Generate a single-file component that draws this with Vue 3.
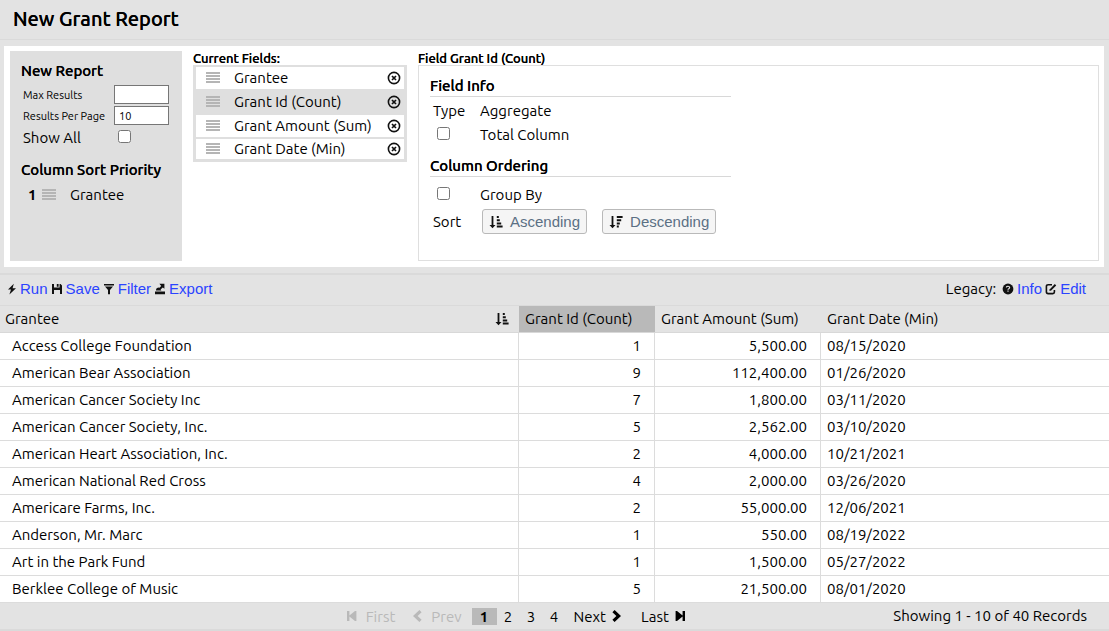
<script setup>
import { ref } from 'vue'

const maxResults = ref('')
const perPage = ref('10')
const selected = ref(1)
const fields = ['Grantee', 'Grant Id (Count)', 'Grant Amount (Sum)', 'Grant Date (Min)']
const rows = [
  ['Access College Foundation', '1', '5,500.00', '08/15/2020'],
  ['American Bear Association', '9', '112,400.00', '01/26/2020'],
  ['American Cancer Society Inc', '7', '1,800.00', '03/11/2020'],
  ['American Cancer Society, Inc.', '5', '2,562.00', '03/10/2020'],
  ['American Heart Association, Inc.', '2', '4,000.00', '10/21/2021'],
  ['American National Red Cross', '4', '2,000.00', '03/26/2020'],
  ['Americare Farms, Inc.', '2', '55,000.00', '12/06/2021'],
  ['Anderson, Mr. Marc', '1', '550.00', '08/19/2022'],
  ['Art in the Park Fund', '1', '1,500.00', '05/27/2022'],
  ['Berklee College of Music', '5', '21,500.00', '08/01/2020']
]
</script>

<template>
  <div class="page">
    <header class="title-bar"><h1>New Grant Report</h1></header>

    <main>
      <section class="builder">
        <aside class="settings">
          <h2>New Report</h2>
          <div class="setting">
            <label for="max">Max Results</label>
            <input id="max" v-model="maxResults" type="text" />
          </div>
          <div class="setting">
            <label for="per">Results Per Page</label>
            <input id="per" v-model="perPage" type="text" />
          </div>
          <div class="setting show-all">
            <label for="all">Show All</label>
            <input id="all" type="checkbox" />
          </div>
          <h2 class="priority-title">Column Sort Priority</h2>
          <div class="priority">
            <b>1</b>
            <span class="grip"></span>
            <span class="priority-name">Grantee</span>
          </div>
        </aside>

        <section class="current">
          <h3>Current Fields:</h3>
          <ul>
            <li v-for="(f, i) in fields" :key="f" :class="{ selected: i === selected }" @click="selected = i">
              <span class="grip"></span>
              <span class="field-name">{{ f }}</span>
              <button type="button" class="remove" :aria-label="'Remove ' + f">
                <svg width="14" height="14" viewBox="0 0 14 14">
                  <circle cx="7" cy="7" r="5.6" fill="none" stroke="#111" stroke-width="1.6" />
                  <path d="M5 5 9 9M9 5 5 9" stroke="#111" stroke-width="1.7" />
                </svg>
              </button>
            </li>
          </ul>
        </section>

        <section class="details">
          <h3>Field Grant Id (Count)</h3>
          <div class="details-box">
            <h2>Field Info</h2>
            <div class="info-row type-row"><span>Type</span><span>Aggregate</span></div>
            <div class="info-row">
              <input id="total" type="checkbox" />
              <label for="total">Total Column</label>
            </div>
            <h2 class="ordering">Column Ordering</h2>
            <div class="info-row group-row">
              <input id="group" type="checkbox" />
              <label for="group">Group By</label>
            </div>
            <div class="info-row sort-row">
              <span>Sort</span>
              <div class="sorts">
                <button type="button" class="sort">
                  <svg width="14" height="14" viewBox="0 0 14 14">
                    <path d="M2.6 1h1.8v9H6.5L3.5 13.2.5 10h2.1zM7.8 1h2v2h-2zM7.8 4.2h3v2h-3zM7.8 7.4h4.4v2H7.8zM7.8 10.6h5.8v2H7.8z" fill="#111" />
                  </svg>
                  Ascending
                </button>
                <button type="button" class="sort">
                  <svg width="14" height="14" viewBox="0 0 14 14">
                    <path d="M2.6 1h1.8v9H6.5L3.5 13.2.5 10h2.1zM7.8 1h5.8v2H7.8zM7.8 4.2h4.4v2H7.8zM7.8 7.4h3v2h-3zM7.8 10.6h2v2h-2z" fill="#111" />
                  </svg>
                  Descending
                </button>
              </div>
            </div>
          </div>
        </section>
      </section>

      <nav class="toolbar">
        <div class="actions">
          <a href="#run">
            <svg width="10" height="12" viewBox="0 0 10 12"><path d="M6.8.8 1 6.6h3L2.4 11.4 9 5.2H5.6z" fill="#111" /></svg>Run</a>
          <a href="#save">
            <svg width="12" height="12" viewBox="0 0 12 12"><path d="M1 1h2v3.6h5.6V1h1L11 2.4V11H9V7H3v4H1zM5.8 1h1.8v2.8H5.8z" fill="#111" /></svg>Save</a>
          <a href="#filter">
            <svg width="12" height="12" viewBox="0 0 12 12"><path d="M1 1h10v1.4H1zM2 3.4h8L7 7v4.2H5V7z" fill="#111" /></svg>Filter</a>
          <a href="#export">
            <svg width="12" height="12" viewBox="0 0 12 12"><path d="M1 8.6h10v2.6H1zM5.4.8h5v5L8.8 4.4 6.6 6.4 5.2 5l2-2zM2 7.6C2 5.4 3 4.6 5 4.6L7.4 7.6z" fill="#111" /></svg>Export</a>
        </div>
        <div class="legacy">
          <span class="legacy-label">Legacy:</span>
          <a href="#info">
            <svg width="12" height="12" viewBox="0 0 12 12"><circle cx="6" cy="6" r="5.4" fill="#111" /><path d="M4.4 4.6C4.4 2.8 7.8 2.8 7.6 4.7 7.5 5.8 6 5.7 6 6.8M6 7.6v1.2" fill="none" stroke="#e3e3e3" stroke-width="1.2" /></svg>Info</a>
          <a href="#edit">
            <svg width="12" height="12" viewBox="0 0 12 12"><path d="M7 1.8H3.2Q1.4 1.8 1.4 3.4V9q0 1.6 1.8 1.6h4.6Q9.4 10.6 9.4 9V7" fill="none" stroke="#111" stroke-width="1.6" /><path d="M4.4 8 4.8 6.2 9.8 1l1.4 1.4-5 5.2z" fill="#111" /></svg>Edit</a>
        </div>
      </nav>

      <table>
        <colgroup><col class="c1" /><col class="c2" /><col class="c3" /><col /></colgroup>
        <thead>
          <tr>
            <th>
              <div class="sorted">
                Grantee
                <svg width="14" height="14" viewBox="0 0 14 14">
                  <path d="M2.6 1h1.8v9H6.5L3.5 13.2.5 10h2.1zM7.8 1h2v2h-2zM7.8 4.2h3v2h-3zM7.8 7.4h4.4v2H7.8zM7.8 10.6h5.8v2H7.8z" fill="#111" />
                </svg>
              </div>
            </th>
            <th class="active">Grant Id (Count)</th>
            <th>Grant Amount (Sum)</th>
            <th>Grant Date (Min)</th>
          </tr>
        </thead>
        <tbody>
          <tr v-for="r in rows" :key="r[0]">
            <td>{{ r[0] }}</td>
            <td class="num">{{ r[1] }}</td>
            <td class="num">{{ r[2] }}</td>
            <td class="date">{{ r[3] }}</td>
          </tr>
        </tbody>
      </table>
    </main>

    <footer>
      <nav class="pager">
        <button type="button" class="first" disabled>
          <svg width="12" height="14" viewBox="0 0 12 14"><path d="M1 2h2.4v4.4L9 2h1.4v10H9L3.4 7.6V12H1z" fill="currentColor" /></svg>First
        </button>
        <button type="button" class="prev" disabled>
          <svg width="12" height="14" viewBox="0 0 12 14"><path d="M8.4 1 10.6 3.2 6.6 7l4 3.8L8.4 13 2 7z" fill="currentColor" /></svg>Prev
        </button>
        <button type="button" class="num-btn current-page">1</button>
        <button type="button" class="num-btn">2</button>
        <button type="button" class="num-btn">3</button>
        <button type="button" class="num-btn">4</button>
        <button type="button" class="next">
          Next<svg width="12" height="14" viewBox="0 0 12 14"><path d="M3.6 1 1.4 3.2l4 3.8-4 3.8L3.6 13 10 7z" fill="currentColor" /></svg>
        </button>
        <button type="button" class="last">
          Last<svg width="12" height="14" viewBox="0 0 12 14"><path d="M11 2H8.6v4.4L3 2H1.6v10H3l5.6-4.4V12H11z" fill="currentColor" /></svg>
        </button>
      </nav>
      <span class="count">Showing 1 - 10 of 40 Records</span>
    </footer>
  </div>
</template>

<style>
body { background: #e3e3e3; }
</style>

<style scoped>
* { box-sizing: border-box; }
.page {
  font-family: Ubuntu, "Noto Sans", sans-serif;
  font-size: 15px;
  line-height: 20px;
  color: #000;
  background: #e3e3e3;
}
h1, h2, h3, ul { margin: 0; padding: 0; }
h1 { font-size: 20px; line-height: 24px; font-weight: 500; text-shadow: 0 0 0 #000; }
h2 { font-size: 15px; line-height: 20px; font-weight: 500; text-shadow: 0 0 0 #000; }
h3 { font-size: 13px; line-height: 14px; font-weight: 500; text-shadow: 0 0 0 #000; }
svg { display: block; flex: none; }
button { font: inherit; color: inherit; cursor: pointer; }
input[type="checkbox"] { margin: 0; width: 13px; height: 13px; }

.title-bar { padding: 7px 13px 8px; border-bottom: 1px solid #dadada; }
.builder {
  display: flex;
  margin: 6px 5px 6px 4px;
  padding: 5px 5px 6px 6px;
  background: #fff;
}
.settings { width: 172px; background: #dfdfdf; padding: 10px 11px; }
.setting {
  display: flex;
  align-items: center;
  justify-content: space-between;
  height: 21px;
  padding: 0 2px;
  font-size: 11px;
}
.settings h2 + .setting { margin-top: 3px; }
.setting input[type="text"] {
  width: 55px;
  height: 19px;
  border: 1px solid #767676;
  background: #fff;
  padding: 0 4px;
  font: 11px Ubuntu, "Noto Sans", sans-serif;
}
.show-all { font-size: 15px; height: 24px; }
.show-all input { margin: -3px 38px 0 0; }
.priority-title { margin-top: 10px; white-space: nowrap; }
.priority { display: flex; align-items: center; margin-top: 5px; padding-left: 7px; }
.priority b { width: 14px; font-weight: 600; }
.grip {
  flex: none;
  width: 14px;
  height: 12px;
  background: repeating-linear-gradient(#b5b5b5 0 2px, transparent 2px 3px);
}
.priority-name { margin-left: 14px; }

.current { width: 214px; margin-left: 11px; }
.current h3, .details h3 { height: 14px; }
.current ul { list-style: none; border: 2px solid #dfdfdf; border-width: 2px 3px 3px; }
.current li {
  display: flex;
  align-items: center;
  height: 24px;
  padding: 0 3px 0 10px;
  border-bottom: 2px solid #dfdfdf;
}
.current li.selected { background: #dfdfdf; }
.current li:last-child { border-bottom: 0; height: 20px; }
.field-name { flex: 1; margin-left: 14px; white-space: nowrap; }
.remove { border: 0; background: none; padding: 0; }

.details { flex: 1; display: flex; flex-direction: column; margin-left: 11px; }
.details-box { flex: 1; border: 1px solid #dfdfdf; padding: 10px 11px 26px; }
.details-box h2 { width: 301px; border-bottom: 1px solid #d8d8d8; height: 21px; }
.info-row {
  display: grid;
  grid-template-columns: 47px auto;
  align-items: center;
  min-height: 24px;
  padding-left: 3px;
}
.info-row input { margin: -4px 0 0 4px; }
.type-row { margin-top: 2px; }
.details-box h2.ordering { margin-top: 9px; }
.group-row { margin-top: 6px; }
.sort-row { margin-top: 2px; }
.sorts { display: flex; gap: 15px; padding-left: 2px; }
.sort {
  display: flex;
  align-items: center;
  gap: 7px;
  height: 25px;
  padding: 0 6px;
  border: 1px solid #b9b9b9;
  border-radius: 3px;
  background: #f5f5f5;
  color: #5b7084;
  font: 15px "Liberation Sans", Arial, sans-serif;
}

.toolbar {
  display: flex;
  justify-content: space-between;
  align-items: center;
  height: 33px;
  padding: 0 23px 2px 7px;
  border-top: 2px solid #dadada;
  border-bottom: 1px solid #dadada;
}
.actions, .legacy { display: flex; align-items: center; gap: 3px; }
.toolbar a {
  display: flex;
  align-items: center;
  gap: 3px;
  color: #2b44ff;
  text-decoration: none;
  font: 15px/20px "Liberation Sans", Arial, sans-serif;
}
.legacy-label { margin-right: 3px; }

table { width: 100%; table-layout: fixed; border-collapse: separate; border-spacing: 0; }
.c1 { width: 46.8%; }
.c2 { width: 136px; }
.c3 { width: 166px; }
th { height: 27px; padding: 0 6px; text-align: left; font-weight: 400; border-bottom: 1px solid #d8d8d8; }
th:first-child { padding: 0 10px 0 5px; }
.sorted { display: flex; justify-content: space-between; align-items: center; }
th.active { background: #b9b9b9; }
td {
  height: 27px;
  padding: 0 12px;
  background: #fff;
  border-right: 1px solid #dcdcdc;
  border-bottom: 1px solid #dcdcdc;
}
td.num { text-align: right; padding-right: 13px; }
td.date { padding-left: 6px; border-right: 0; }

footer { display: flex; align-items: center; height: 28px; padding: 0 22px 0 0; border-bottom: 2px solid #dadada; }
.pager { display: flex; align-items: center; margin-left: 31.8%; }
.pager button { display: flex; align-items: center; border: 0; background: none; padding: 0; line-height: 17px; }
.pager button:disabled { color: #b9b9b9; cursor: default; }
.pager .first { gap: 8px; margin-right: 16px; }
.pager .prev { gap: 8px; margin-right: 10px; }
.pager .num-btn { width: 23px; justify-content: center; }
.pager .current-page { width: 25px; height: 17px; background: #b9b9b9; font-weight: 600; }
.pager .next { gap: 5px; margin-left: 8px; }
.pager .last { gap: 5px; margin-left: 18px; }
.count { margin-left: auto; }
</style>
